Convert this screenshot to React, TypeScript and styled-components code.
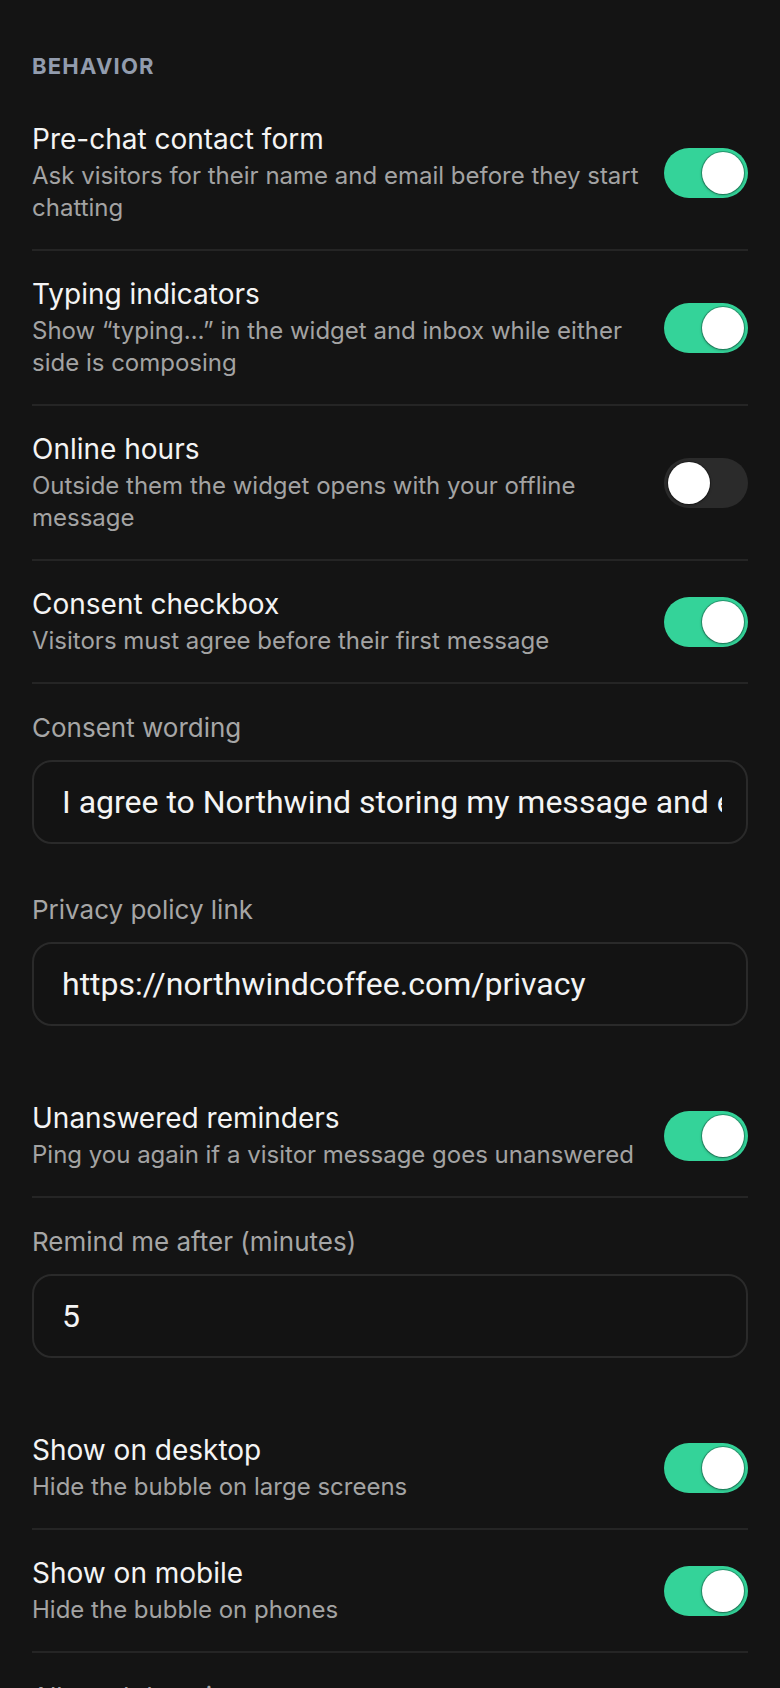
import React from "react";
import styled, { createGlobalStyle } from "styled-components";

const GlobalStyle = createGlobalStyle`
  html, body {
    margin: 0;
    padding: 0;
    background: #141414;
  }
  body {
    font-family: Inter, "Noto Sans", sans-serif;
    -webkit-font-smoothing: antialiased;
  }
  * { box-sizing: border-box; }
`;

const Page = styled.div`
  padding: 52px 32px 0;
  min-height: 1688px;
  background: #141414;
  display: flex;
  flex-direction: column;
`;

const SectionHeader = styled.h2`
  margin: 0 0 16px;
  font-size: 22px;
  line-height: 28px;
  font-weight: 700;
  letter-spacing: 0.055em;
  text-transform: uppercase;
  color: #929cae;
`;

const Group = styled.section<{ $spaced?: boolean }>`
  display: flex;
  flex-direction: column;
  margin-top: ${(p) => (p.$spaced ? "27px" : "0")};
`;

const Row = styled.div`
  display: flex;
  align-items: center;
  gap: 18px;
  padding: 25px 0;
  border-bottom: 2px solid #252525;
`;

const RowText = styled.div`
  flex: 1;
  min-width: 0;
  display: flex;
  flex-direction: column;
  gap: 3px;
`;

const Title = styled.div`
  font-size: 28px;
  line-height: 36px;
  color: #f4f4f4;
`;

const Description = styled.div`
  font-size: 24px;
  line-height: 32px;
  color: #a3a3a3;
`;

const Track = styled.button<{ $on: boolean }>`
  flex: none;
  position: relative;
  width: 84px;
  height: 50px;
  border: none;
  border-radius: 25px;
  padding: 0;
  cursor: pointer;
  background: ${(p) => (p.$on ? "#34d399" : "#2b2b2b")};
`;

const Knob = styled.span<{ $on: boolean }>`
  position: absolute;
  top: 4px;
  left: ${(p) => (p.$on ? "38px" : "4px")};
  width: 42px;
  height: 42px;
  border-radius: 50%;
  background: #ffffff;
  box-shadow: 0 0 0 1px rgba(0, 0, 0, 0.25), 0 1px 3px rgba(0, 0, 0, 0.35);
`;

const Field = styled.label`
  display: flex;
  flex-direction: column;
  gap: 16px;
  padding: 28px 0 22px;
`;

const FieldLabel = styled.span`
  font-size: 26px;
  line-height: 32px;
  color: #a6a6a6;
`;

const Input = styled.input`
  width: 100%;
  height: 84px;
  padding: 0 24px 0 28px;
  border: 2px solid #2a2a2a;
  border-radius: 20px;
  background: #131313;
  color: #f4f4f4;
  font-family: Roboto, "Liberation Sans", Arial, sans-serif;
  font-size: 32px;
  outline: none;
`;

type ToggleRowProps = { title: string; desc: string; on: boolean };

const Toggle: React.FC<{ on: boolean }> = ({ on }) => {
  const [value, setValue] = React.useState(on);
  return (
    <Track $on={value} role="switch" aria-checked={value} onClick={() => setValue(!value)}>
      <Knob $on={value} />
    </Track>
  );
};

const ToggleRow: React.FC<ToggleRowProps> = ({ title, desc, on }) => (
  <Row>
    <RowText>
      <Title>{title}</Title>
      <Description>{desc}</Description>
    </RowText>
    <Toggle on={on} />
  </Row>
);

const TextField: React.FC<{ label: string; value: string; inputMode?: "numeric" }> = ({
  label,
  value,
  inputMode,
}) => {
  const [v, setV] = React.useState(value);
  return (
    <Field>
      <FieldLabel>{label}</FieldLabel>
      <Input value={v} inputMode={inputMode} onChange={(e) => setV(e.target.value)} />
    </Field>
  );
};

export default function App() {
  return (
    <>
      <GlobalStyle />
      <Page>
        <SectionHeader>Behavior</SectionHeader>
        <Group>
          <ToggleRow
            title="Pre-chat contact form"
            desc="Ask visitors for their name and email before they start chatting"
            on
          />
          <ToggleRow
            title="Typing indicators"
            desc="Show “typing…” in the widget and inbox while either side is composing"
            on
          />
          <ToggleRow
            title="Online hours"
            desc="Outside them the widget opens with your offline message"
            on={false}
          />
          <ToggleRow
            title="Consent checkbox"
            desc="Visitors must agree before their first message"
            on
          />
          <TextField
            label="Consent wording"
            value="I agree to Northwind storing my message and email so they can reply to me."
          />
          <TextField label="Privacy policy link" value="https://northwindcoffee.com/privacy" />
        </Group>
        <Group $spaced>
          <ToggleRow
            title="Unanswered reminders"
            desc="Ping you again if a visitor message goes unanswered"
            on
          />
          <TextField label="Remind me after (minutes)" value="5" inputMode="numeric" />
        </Group>
        <Group $spaced>
          <ToggleRow title="Show on desktop" desc="Hide the bubble on large screens" on />
          <ToggleRow title="Show on mobile" desc="Hide the bubble on phones" on />
          <TextField label="Allowed domains" value="northwindcoffee.com" />
        </Group>
      </Page>
    </>
  );
}
